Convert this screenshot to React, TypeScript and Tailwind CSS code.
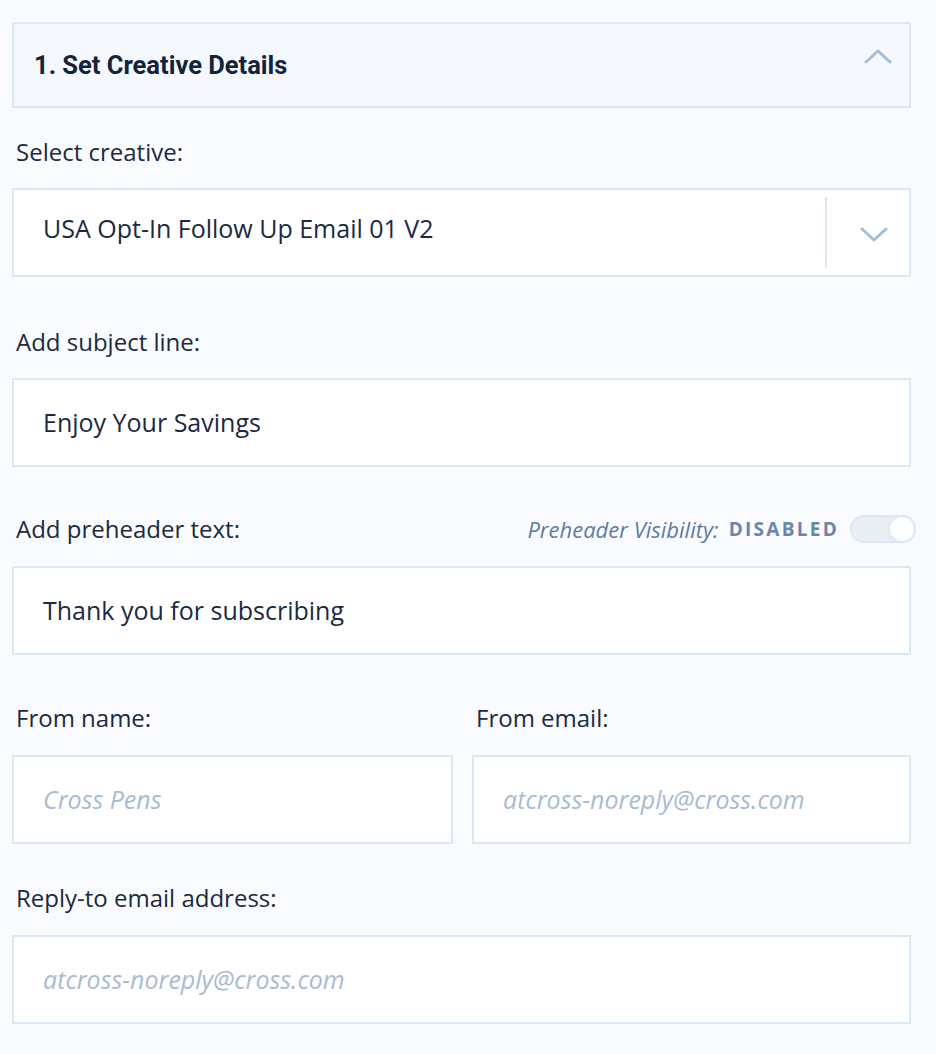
import React from "react";

const body = { fontFamily: '"Open Sans", "Liberation Sans", sans-serif' };

function Chevron({ up }: { up?: boolean }) {
  return (
    <svg width="28" height="16" viewBox="0 0 28 16" fill="none">
      <path
        d={up ? "M2 14 L14 3 L26 14" : "M2 2 L14 13 L26 2"}
        stroke="#a4bdd9"
        strokeWidth="3"
        strokeLinecap="round"
        strokeLinejoin="round"
      />
    </svg>
  );
}

function Label({ children }: { children: React.ReactNode }) {
  return <div className="pl-1 text-[24px] leading-[30px] text-[#1b2a41]">{children}</div>;
}

function Box({ children, placeholder }: { children: React.ReactNode; placeholder?: boolean }) {
  return (
    <div
      className={
        "flex h-[89px] items-center border-2 border-[#dde8f7] bg-white pl-[29px] text-[25px] " +
        (placeholder ? "italic text-[#a9bbd3]" : "text-[#1b2a41]")
      }
    >
      {children}
    </div>
  );
}

export default function App() {
  return (
    <div className="min-h-[1054px] w-[936px] bg-[#f9fbfe] pl-3 pr-[25px] pt-[22px]" style={body}>
      <div className="flex h-[86px] justify-between border-2 border-[#dde8f7] bg-[#f5f8fd] pl-[20px] pr-[17px]">
        <div
          className="self-center text-[25.5px] font-bold text-[#14233b]"
          style={{ fontFamily: 'Roboto, "Liberation Sans", sans-serif' }}
        >
          1. Set Creative Details
        </div>
        <div className="mt-[24px] self-start">
          <Chevron up />
        </div>
      </div>

      <div className="mt-[29px]">
        <Label>Select creative:</Label>
      </div>
      <div className="mt-[21px] flex h-[89px] items-center border-2 border-[#dde8f7] bg-white">
        <div className="flex-1 pb-2 pl-[29px] text-[25px] text-[#1b2a41]">USA Opt-In Follow Up Email 01 V2</div>
        <div className="h-[71px] w-[2px] bg-[#dde8f7]" />
        <div className="flex w-[82px] items-center justify-center pl-[11px] pt-1">
          <Chevron />
        </div>
      </div>

      <div className="mt-[50px]">
        <Label>Add subject line:</Label>
      </div>
      <div className="mt-[21px]">
        <Box>Enjoy Your Savings</Box>
      </div>

      <div className="mt-[47px] flex h-[30px] items-center justify-between">
        <Label>Add preheader text:</Label>
        <div className="-mr-[5px] flex items-center leading-[30px]">
          <span className="text-[22px] italic text-[#5f7ba1]">Preheader Visibility:</span>
          <span className="ml-[10px] text-[19px] font-bold tracking-[0.12em] text-[#6b86a9]">DISABLED</span>
          <div className="ml-[11px] flex h-[28px] w-[66px] items-center justify-end rounded-full border-2 border-[#dde8f7] bg-[#e9eef5]">
            <div className="h-[28px] w-[28px] -mr-[2px] rounded-full border-2 border-[#dde8f7] bg-white" />
          </div>
        </div>
      </div>
      <div className="mt-[22px]">
        <Box>Thank you for subscribing</Box>
      </div>

      <div className="mt-[48px] grid grid-cols-[441px_1fr] gap-[19px]">
        <div>
          <Label>From name:</Label>
          <div className="mt-[22px]">
            <Box placeholder>Cross Pens</Box>
          </div>
        </div>
        <div>
          <Label>From email:</Label>
          <div className="mt-[22px]">
            <Box placeholder>atcross-noreply@cross.com</Box>
          </div>
        </div>
      </div>

      <div className="mt-[39px]">
        <Label>Reply-to email address:</Label>
      </div>
      <div className="mt-[22px]">
        <Box placeholder>atcross-noreply@cross.com</Box>
      </div>
    </div>
  );
}
